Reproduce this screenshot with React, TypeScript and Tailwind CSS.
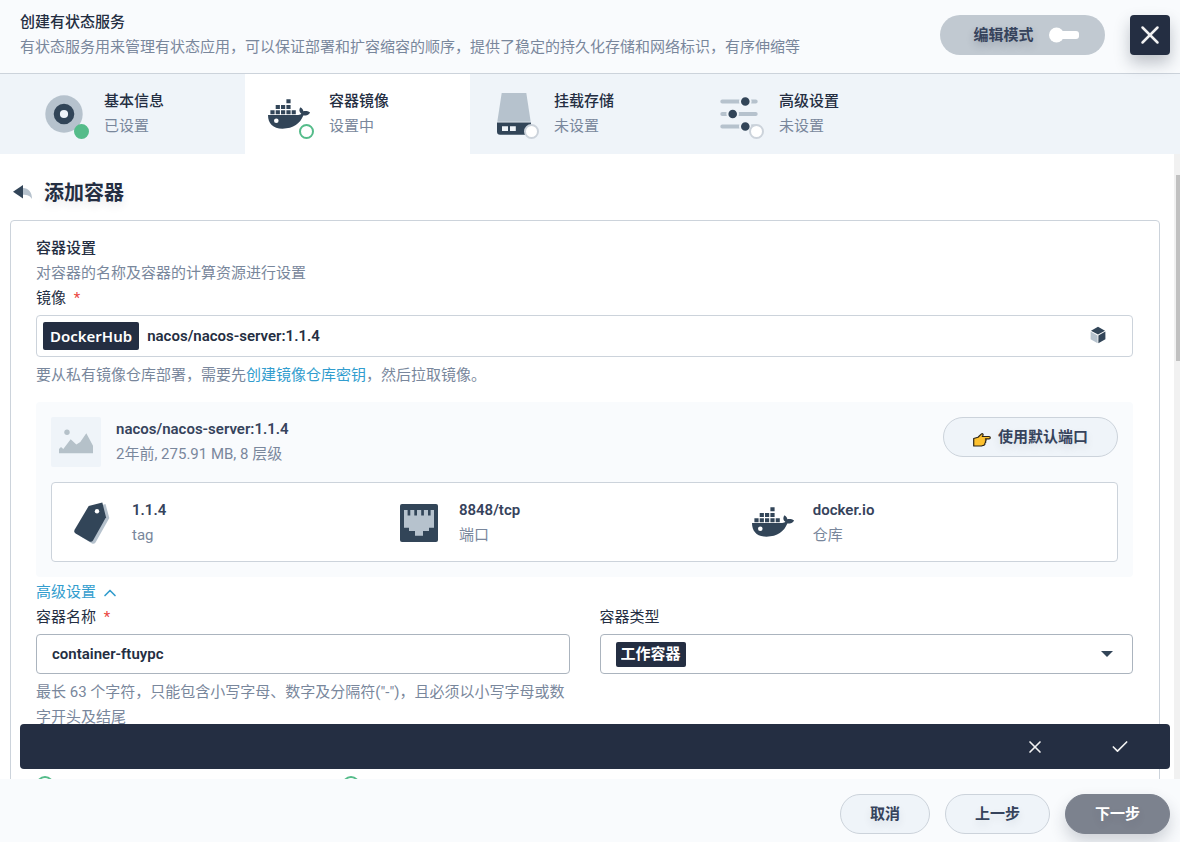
import { useState } from 'react';
import type { ReactNode } from 'react';
import { Check, ChevronUp, X } from 'lucide-react';

const DARK = '#324558';
const LIGHT = '#b6c2cd';

function InfoIcon() {
  return (
    <svg width="48" height="48" viewBox="0 0 48 48">
      <circle cx="24" cy="24" r="18.7" fill={LIGHT} />
      <circle cx="24" cy="24" r="7.2" fill="#eff4f9" stroke={DARK} strokeWidth="6.2" />
    </svg>
  );
}

function DockerIcon() {
  return (
    <svg width="48" height="48" viewBox="0 0 48 48" fill={DARK}>
      <path d="M21.4 9.3h4.2v4h-4.2zM10.7 15h4.2v4.1h-4.2zM16 15h4.2v4.1H16zM21.4 15h4.2v4.1h-4.2zM5.4 20.2h4.2v4H5.4zM10.7 20.2h4.2v4h-4.2zM16 20.2h4.2v4H16zM21.4 20.2h4.2v4h-4.2zM26.7 20.2h4.1v4h-4.1z" />
      <path
        fillRule="evenodd"
        d="M3 25h30.2c1.5 0 2.6-.5 3.1-1.2-2.4-1.8-2.5-4.6-.8-6.5 1.9 1.1 2.8 2.6 2.8 4 2.2-.5 4.7-.1 6.8 1.2-1.3 2.4-3.6 3.2-6.8 3.1C35.2 33.500 28.500 38.700 17.500 38.700 8 38.700 3 33.500 3 25zm8.300 3.400a2.300 2.300 0 1 0 0 4.600 2.300 2.300 0 0 0 0-4.600z"
      />
    </svg>
  );
}

function StorageIcon() {
  return (
    <svg width="48" height="48" viewBox="0 0 48 48">
      <path d="M11.700 3h24.600l4.400 28.700H7.300z" fill={LIGHT} />
      <path d="M7 32.500h34v9.200a3 3 0 0 1-3 3H10a3 3 0 0 1-3-3z" fill={DARK} />
      <path d="M12 36.300h6V41h-6zM20 36.300h5.800V41H20z" fill="#eff4f9" />
    </svg>
  );
}

function SlidersIcon() {
  return (
    <svg width="48" height="48" viewBox="0 0 48 48">
      <path
        d="M7.300 11.500h33.400M7.300 24h33.400M7.300 36.500h33.400"
        stroke={LIGHT}
        strokeWidth="4"
        strokeLinecap="round"
      />
      <g fill={DARK} stroke="#eff4f9" strokeWidth="2">
        <circle cx="30.300" cy="11.500" r="5.300" />
        <circle cx="17.700" cy="24" r="5.300" />
        <circle cx="30.300" cy="36.500" r="5.300" />
      </g>
    </svg>
  );
}

function TagIcon() {
  return (
    <svg width="48" height="48" viewBox="0 0 48 48">
      <path d="M24 10l13.500-4L41.300 20 27.500 44.500q-1.500 2-3.500 1L12 38z" fill={LIGHT} />
      <path
        fill={DARK}
        d="M20.700 8L34.300 4.500 38 19.300 25 42.400q-1.400 2-3.500 1L8 35.700q-2.500-1.500-1.400-4z"
      />
      <circle cx="29" cy="13.300" r="2.200" fill="#fff" />
    </svg>
  );
}

function PortIcon() {
  return (
    <svg width="48" height="48" viewBox="0 0 48 48">
      <rect x="5" y="6" width="38" height="38" rx="2" fill={DARK} />
      <path
        d="M9 12h3.600v5.600h2.700V12h4v5.600H22V12h4.200v5.600h2.700V12H33v5.600h2.600V12H39v17.800h-5V33h-6v4.700h-8V33h-6v-3.200H9z"
        fill={LIGHT}
      />
    </svg>
  );
}

function PictureIcon() {
  return (
    <svg width="50" height="50" viewBox="0 0 50 50" fill="#b5c1c9">
      <circle cx="16" cy="15.300" r="2.700" />
      <path d="M8 36.300V32l2-2 2.300 2 7.400-9.700 5.600 5.200L29.300 25l6-8.700L42 28.700v7.600z" />
    </svg>
  );
}

function CubeIcon() {
  return (
    <svg width="16" height="20" viewBox="0 0 16 20">
      <path d="M8 .8l7 3.900-7 3.900-7-3.900z" fill={DARK} />
      <path d="M.6 5.600l7 3.900v7.700l-7-3.900z" fill={LIGHT} />
      <path d="M15.400 5.600l-7 3.900v7.700l7-3.900z" fill={DARK} />
    </svg>
  );
}

function BackIcon() {
  return (
    <svg width="20" height="20" viewBox="0 0 20 20">
      <path d="M11 5c5.500.3 9 4 9 11-1.800-3.200-4.500-4.300-9-4.300z" fill={LIGHT} />
      <path d="M1 8.700L11 2v13.400z" fill={DARK} />
    </svg>
  );
}

function PointIcon() {
  return (
    <svg width="18" height="20" viewBox="0 -6 18 20">
      <path
        d="M.7 5.500L5 4.200 8.500.9c1-.6 2 .3 1.500 1.300L9.300 3.500H16c1.700 0 1.700 2.400 0 2.400h-3.600c1 .5.900 1.900 0 2.200.7.700.3 1.900-.6 2 .4 1-.1 2-1.300 2.200L8.500 13H.7z"
        fill="#fdc12f"
        stroke="#2b2418"
        strokeWidth="1.200"
        strokeLinejoin="round"
      />
    </svg>
  );
}

const steps = [
  { title: '基本信息', status: '已设置', state: 'done', icon: <InfoIcon /> },
  { title: '容器镜像', status: '设置中', state: 'current', icon: <DockerIcon /> },
  { title: '挂载存储', status: '未设置', state: 'unset', icon: <StorageIcon /> },
  { title: '高级设置', status: '未设置', state: 'unset', icon: <SlidersIcon /> },
];

const badgeStyles: Record<string, string> = {
  done: 'bg-[#55bc8a] border-[#55bc8a]',
  current: 'bg-white border-[#55bc8a]',
  unset: 'bg-white border-[#ccd3db]',
};

const imageFacts = [
  { value: '1.1.4', label: 'tag', icon: <TagIcon /> },
  { value: '8848/tcp', label: '端口', icon: <PortIcon /> },
  { value: 'docker.io', label: '仓库', icon: <DockerIcon /> },
];

function PillButton({ children, primary = false }: { children: ReactNode; primary?: boolean }) {
  return (
    <button
      type="button"
      className={`flex h-10 items-center gap-[7px] rounded-full border px-[29px] font-bold text-shadow-[0_4px_8px_rgba(36,46,66,0.1)] ${
        primary
          ? 'border-[#7c828e] bg-[#7c828e] text-white shadow-[0_8px_16px_rgba(36,46,66,0.2)]'
          : 'border-[#ccd3db] bg-[#eff4f9] text-[#36435c]'
      }`}
    >
      {children}
    </button>
  );
}

export default function App() {
  const [name, setName] = useState('container-ftuypc');
  const [image, setImage] = useState('nacos/nacos-server:1.1.4');

  return (
    <div className="flex h-screen flex-col bg-white font-['Roboto','Noto_Sans_CJK_SC',sans-serif] text-[15px] leading-[25px] text-[#242e42]">
      {/* Header */}
      <header className="relative z-10 flex h-[74px] shrink-0 items-start border-b border-[#ccd3db] bg-[#f9fbfd] pr-[10px] pl-5">
        <div className="min-w-0 flex-1 pt-[10px]">
          <h1 className="font-medium">创建有状态服务</h1>
          <p className="truncate text-[#79879c]">
            有状态服务用来管理有状态应用，可以保证部署和扩容缩容的顺序，提供了稳定的持久化存储和网络标识，有序伸缩等
          </p>
        </div>
        <div className="flex gap-[25px] pt-[15px]">
          <button
            type="button"
            role="switch"
            aria-checked="false"
            className="flex h-10 w-[165px] items-center justify-center gap-[15px] rounded-full bg-[#c1c9d1] pl-2 font-bold text-[#36435c] text-shadow-[0_4px_8px_rgba(36,46,66,0.2)]"
          >
            编辑模式
            <svg width="31" height="16" viewBox="0 0 31 16" fill="#fff">
              <rect x="8" y="4" width="22" height="8" rx="3" />
              <circle cx="7.500" cy="8" r="7.500" />
            </svg>
          </button>
          <button
            type="button"
            aria-label="关闭"
            className="flex h-10 w-10 items-center justify-center rounded bg-[#242e42] text-[#f2f2f2] shadow-[0_8px_16px_rgba(36,46,66,0.28)]"
          >
            <X size={30} strokeWidth={2} />
          </button>
        </div>
      </header>

      {/* Steps */}
      <nav className="flex h-20 shrink-0 bg-[#eff4f9] pl-5">
        {steps.map((step) => (
          <button
            key={step.title}
            type="button"
            className={`flex w-[225px] items-center gap-4 px-5 text-left ${
              step.state === 'current' ? 'bg-white' : ''
            }`}
          >
            <span className="relative">
              {step.icon}
              <span
                className={`absolute -right-px -bottom-px h-[15px] w-[15px] rounded-full border-2 ${badgeStyles[step.state]}`}
              />
            </span>
            <span>
              <span className="block font-medium">{step.title}</span>
              <span className="block text-[#79879c]">{step.status}</span>
            </span>
          </button>
        ))}
      </nav>

      {/* Body */}
      <div className="relative flex min-h-0 flex-1">
        <main className="min-w-0 flex-1 overflow-hidden pr-[14px] pl-[10px]">
          <div className="flex h-[66px] items-center gap-3 pt-3 pl-[2px]">
            <button type="button" aria-label="返回">
              <BackIcon />
            </button>
            <h2 className="text-xl font-bold text-shadow-[0_4px_8px_rgba(36,46,66,0.1)]">添加容器</h2>
          </div>

          <section className="rounded border border-[#ccd3db] pt-[15px] pr-[26px] pb-[15px] pl-[25px]">
            <h3 className="font-medium">容器设置</h3>
            <p className="text-[#79879c]">对容器的名称及容器的计算资源进行设置</p>

            <label htmlFor="image" className="block">
              镜像 <span className="ml-1 text-[#ea4641]">*</span>
            </label>
            <div className="mt-1 flex h-[42px] items-center rounded border border-[#ccd3db] pr-[26px] pl-[6px]">
              <span className="mr-2 rounded-xs bg-[#242e42] px-[7px] font-['Noto_Sans'] leading-7 font-semibold text-white">
                DockerHub
              </span>
              <input
                id="image"
                value={image}
                onChange={(e) => setImage(e.target.value)}
                className="min-w-0 flex-1 bg-transparent font-semibold outline-none"
              />
              <button type="button" aria-label="选择镜像">
                <CubeIcon />
              </button>
            </div>
            <p className="mt-[6px] text-[#79879c]">
              要从私有镜像仓库部署，需要先
              <a href="#secret" className="text-[#329dce]">
                创建镜像仓库密钥
              </a>
              ，然后拉取镜像。
            </p>

            {/* Image detail */}
            <div className="mt-[14px] rounded bg-[#f9fbfd] p-[15px]">
              <div className="flex items-start">
                <div className="rounded-xs bg-[#eff4f9]">
                  <PictureIcon />
                </div>
                <div className="ml-[15px] flex-1">
                  <p className="font-semibold text-[#36435c]">nacos/nacos-server:1.1.4</p>
                  <p className="text-[#79879c]">2年前, 275.91 MB, 8 层级</p>
                </div>
                <PillButton>
                  <PointIcon />
                  使用默认端口
                </PillButton>
              </div>
              <ul className="mt-[15px] flex h-20 items-center rounded border border-[#ccd3db] bg-white pr-[30px]">
                {imageFacts.map((fact) => (
                  <li key={fact.label} className="flex flex-auto items-center gap-4 pl-4">
                    {fact.icon}
                    <div className="pt-px">
                      <p className="font-semibold text-[#36435c]">{fact.value}</p>
                      <p className="text-[#79879c]">{fact.label}</p>
                    </div>
                  </li>
                ))}
              </ul>
            </div>

            <button type="button" className="mt-[3px] flex items-center gap-1 text-[#329dce]">
              高级设置
              <ChevronUp size={20} strokeWidth={2} />
            </button>

            <div className="grid grid-cols-2 gap-[30px]">
              <div>
                <label htmlFor="name" className="block">
                  容器名称 <span className="ml-1 text-[#ea4641]">*</span>
                </label>
                <input
                  id="name"
                  value={name}
                  onChange={(e) => setName(e.target.value)}
                  className="mt-1 block h-10 w-full rounded border border-[#abb4be] bg-white px-[15px] font-semibold outline-none"
                />
                <p className="mt-[6px] text-[#79879c]">
                  最长 63 个字符，只能包含小写字母、数字及分隔符("-")，且必须以小写字母或数字开头及结尾
                </p>
              </div>
              <div>
                <label htmlFor="type" className="block">
                  容器类型
                </label>
                <div className="mt-1 flex h-10 items-center justify-between rounded border border-[#abb4be] bg-white pr-[19px] pl-[15px]">
                  <select
                    id="type"
                    className="field-sizing-content h-[25px] appearance-none rounded-xs bg-[#242e42] px-[5px] font-bold text-white outline-none"
                  >
                    <option>工作容器</option>
                  </select>
                  <svg width="12" height="6" viewBox="0 0 12 6" fill={DARK}>
                    <path d="M0 0h12L6 6z" />
                  </svg>
                </div>
              </div>
            </div>

            {/* Next row, scrolled under the edge */}
            <div className="mt-[46px] flex gap-72">
              <span className="h-[18px] w-[18px] rounded-full border-2 border-[#55bc8a]" />
              <span className="h-[18px] w-[18px] rounded-full border-2 border-[#55bc8a]" />
            </div>
          </section>
        </main>

        {/* Scrollbar */}
        <div className="w-[6px] shrink-0 bg-[#f1f1f1] pt-[21px] pl-[2px]">
          <div className="h-[186px] bg-[#c1c1c1]" />
        </div>

        {/* Confirm bar */}
        <div className="absolute right-[10px] bottom-[10px] left-5 flex h-[45px] items-center justify-end gap-[5px] rounded bg-[#242e42] pt-px pr-[10px] text-[#f2f2f2]">
          <button type="button" aria-label="取消添加" className="flex w-20 justify-center">
            <X size={20} strokeWidth={2} />
          </button>
          <button type="button" aria-label="确认添加" className="flex w-20 justify-center">
            <Check size={20} strokeWidth={2} />
          </button>
        </div>
      </div>

      {/* Footer */}
      <footer className="flex h-[63px] shrink-0 items-start justify-end gap-[15px] bg-[#f9fbfd] pt-[15px] pr-[10px]">
        <PillButton>取消</PillButton>
        <PillButton>上一步</PillButton>
        <PillButton primary>下一步</PillButton>
      </footer>
    </div>
  );
}
